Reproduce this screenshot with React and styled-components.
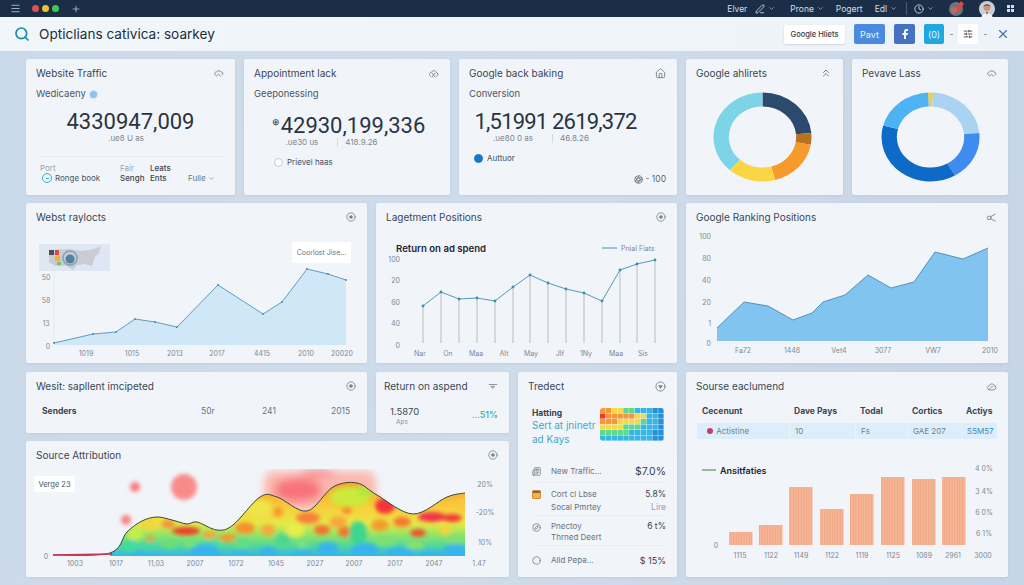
import React from "react";
import styled, { createGlobalStyle } from "styled-components";
import {
  Menu,
  Plus,
  Search,
  X,
  ChevronDown,
  PenLine,
  Clock,
  Home,
  ChevronsUp,
  Facebook,
  SlidersHorizontal,
  Newspaper,
  Compass,
  Circle,
  Aperture,
} from "lucide-react";

const GlobalStyle = createGlobalStyle`
  html, body {
    margin: 0;
    padding: 0;
    width: 1024px;
    height: 585px;
    overflow: hidden;
    font-family: "Inter", "Liberation Sans", sans-serif;
    color: #2c3a4a;
  }
  * { box-sizing: border-box; }
`;

const Page = styled.div`
  width: 1024px;
  height: 585px;
  display: flex;
  flex-direction: column;
  background: linear-gradient(100deg, #cbdaea 0%, #cfdcea 50%, #c6d5e7 100%);
`;

const TopBar = styled.div`
  height: 17px;
  background: #1a2f47;
  display: flex;
  align-items: center;
  padding: 0 10px;
  color: #d3dde8;
  font-size: 8.5px;
  flex: none;
`;

const Dot = styled.span`
  width: 7px;
  height: 7px;
  border-radius: 50%;
  background: ${(p) => p.color};
  margin-left: ${(p) => p.$ml || 3}px;
`;

const TopItem = styled.span`
  display: flex;
  align-items: center;
  gap: 3px;
  margin-left: ${(p) => p.$ml || 0}px;
  white-space: nowrap;
`;

const TopDivider = styled.span`
  width: 1px;
  height: 13px;
  background: #4a5f78;
  margin-left: 9px;
`;

const Spacer = styled.div`
  flex: 1;
`;

const HeaderBar = styled.div`
  height: 34px;
  flex: none;
  background: linear-gradient(90deg, #f1f6fb, #eef3f9);
  display: flex;
  align-items: center;
  padding: 0 14px;
`;

const PageTitle = styled.h1`
  margin: 0 0 0 9px;
  font-size: 13.6px;
  font-weight: 400;
  color: #1f2c3a;
`;

const GhostButton = styled.button`
  width: 61px;
  height: 19px;
  border: 0;
  padding: 0;
  border-radius: 2px;
  background: #fff;
  font: 500 7.5px "Inter", sans-serif;
  color: #2e3a48;
  box-shadow: 0 1px 2px rgba(70, 90, 120, 0.2);
`;

const ColorButton = styled.button`
  width: ${(p) => p.$w}px;
  height: 20px;
  margin-left: ${(p) => p.$ml}px;
  border: 0;
  padding: 0;
  border-radius: 2px;
  background: ${(p) => p.$bg};
  color: #eaf4ff;
  font: 400 9px "Inter", sans-serif;
  display: flex;
  align-items: center;
  justify-content: center;
`;

const Dash = styled.span`
  width: 3px;
  height: 1px;
  background: #8fa0b4;
  margin-left: ${(p) => p.$ml}px;
`;

const Main = styled.main`
  padding: 8px 16px 0 26px;
  display: flex;
  flex-direction: column;
`;

const Row = styled.div`
  display: grid;
  grid-template-columns: ${(p) => p.$cols};
  column-gap: 9px;
  height: ${(p) => p.$h}px;
  margin-bottom: ${(p) => p.$mb || 0}px;
`;

const Stack = styled.div`
  display: flex;
  flex-direction: column;
  gap: 8px;
`;

const Card = styled.section`
  position: relative;
  background: #f1f5fa;
  border-radius: 2px;
  display: flex;
  flex-direction: column;
  min-width: 0;
  height: ${(p) => (p.$h ? `${p.$h}px` : "auto")};
  box-shadow: 0 1px 3px rgba(110, 135, 170, 0.12);
`;

const CardHead = styled.header`
  height: 28px;
  flex: none;
  padding: 0 11px 0 ${(p) => p.$pl || 10}px;
  display: flex;
  align-items: center;
  justify-content: space-between;
  font-size: 10px;
  color: #3a4654;
  white-space: nowrap;
  svg {
    color: #76828f;
  }
`;

const CardBody = styled.div`
  padding: 0 10px;
  flex: 1;
  display: flex;
  flex-direction: column;
`;

const Subtitle = styled.div`
  font-size: 9.5px;
  line-height: 14px;
  color: #4b5764;
  display: flex;
  align-items: center;
  gap: 4px;
`;

const InfoDot = styled.span`
  width: 7px;
  height: 7px;
  border-radius: 50%;
  background: #8cc3ee;
  box-shadow: 0 0 0 1px #d5e6f5;
`;

const BigNumber = styled.div`
  margin-top: 8px;
  font-family: "Roboto", sans-serif;
  font-size: 22px;
  line-height: 26px;
  color: #2a3440;
  text-align: center;
  letter-spacing: ${(p) => p.$ls || 0}px;
  padding: 0 ${(p) => p.$pr || 0}px 0 ${(p) => p.$pl || 0}px;
  white-space: nowrap;
`;

const SmallSup = styled.span`
  font-size: 9px;
  vertical-align: 8px;
  margin-right: 1px;
`;

const SubStats = styled.div`
  display: flex;
  justify-content: center;
  align-items: center;
  height: 10px;
  font-size: 8px;
  color: #7b8692;
  margin-top: -2px;
  padding-right: ${(p) => p.$pr || 0}px;
  white-space: nowrap;
`;

const StatBar = styled.span`
  width: 1px;
  height: 9px;
  background: #d3dbe4;
  margin: 0 7px 0 19px;
`;

const Legend = styled.div`
  display: flex;
  align-items: center;
  gap: 4px;
  font-size: 8px;
  color: #44505d;
  margin-top: 10px;
  padding-left: ${(p) => p.$pl}px;
`;

const RadioMark = styled.span`
  width: 9px;
  height: 9px;
  border-radius: 50%;
  background: ${(p) => (p.$on ? "#1878c8" : "#fff")};
  border: 1px solid ${(p) => (p.$on ? "#1878c8" : "#c4ccd6")};
`;

const FootGrid = styled.div`
  margin-top: 13px;
  border-top: 1px solid #e8edf3;
  padding: 6px 0 0 4px;
  display: grid;
  grid-template-columns: 80px 30px 38px auto;
  font-size: 8px;
  line-height: 10px;
  color: #4a5562;
`;

const FootCell = styled.div`
  display: flex;
  flex-direction: column;
`;

const Muted = styled.span`
  color: #98a3af;
`;

const Strong = styled.span`
  color: #3a4552;
  font-weight: 500;
`;

const FootLabel = styled.span`
  display: flex;
  align-items: center;
  gap: 3px;
  margin-left: 2px;
`;

const ClockMark = styled.span`
  width: 10px;
  height: 10px;
  border-radius: 50%;
  border: 1px solid #2fb3bf;
  display: flex;
  align-items: center;
  justify-content: center;
  &::after {
    content: "";
    width: 3px;
    height: 1px;
    background: #2fb3bf;
  }
`;

const FootMenu = styled.span`
  display: flex;
  align-items: center;
  gap: 2px;
  align-self: flex-end;
  color: #6b7682;
`;

const CornerStat = styled.div`
  position: absolute;
  right: 11px;
  bottom: 11px;
  display: flex;
  align-items: center;
  gap: 3px;
  font-size: 8.5px;
  color: #5b6672;
`;

const DonutWrap = styled.div`
  flex: 1;
  display: flex;
  justify-content: center;
  padding: 5px ${(p) => p.$pr || 0}px 0 0;
`;

const ChartSvg = styled.svg`
  display: block;
  flex: none;
`;

const AxisText = styled.text`
  font-family: "Inter", sans-serif;
  font-size: 7px;
  fill: #7d8894;
`;

const ChartHeading = styled.text`
  font-family: "Inter", sans-serif;
  font-size: ${(p) => p.$size || 9.6}px;
  font-weight: 600;
  fill: #1c2631;
`;

const MapThumb = styled.div`
  position: absolute;
  left: 13px;
  top: 41px;
  width: 71px;
  height: 27px;
  background: #dfe6f4;
`;

const Tooltip = styled.div`
  position: absolute;
  left: 266px;
  top: 39px;
  width: 59px;
  height: 21px;
  background: #fff;
  font-size: 7px;
  color: #6a7480;
  display: flex;
  align-items: center;
  justify-content: center;
`;

const SendersRow = styled.div`
  display: grid;
  grid-template-columns: 159px 61px 69px auto;
  padding: 6px 0 0 6px;
  font-size: 8.5px;
  color: #69747f;
`;

const BoldLabel = styled.span`
  font-weight: 700;
  color: #38434f;
  font-size: 8.5px;
`;

const RoasBody = styled.div`
  padding: 6px 11px 0 14px;
  display: flex;
  justify-content: space-between;
  align-items: center;
`;

const RoasValue = styled.div`
  font-size: 9.5px;
  line-height: 12px;
  color: #3e4955;
  display: flex;
  flex-direction: column;
`;

const RoasNote = styled.span`
  font-size: 6.5px;
  line-height: 9px;
  color: #87929d;
  padding-left: 6px;
`;

const RoasDelta = styled.span`
  font-size: 9px;
  font-weight: 500;
  color: #2cb5ae;
  margin-bottom: 4px;
`;

const HeatLabel = styled.div`
  position: absolute;
  left: 8px;
  top: 35px;
  width: 41px;
  height: 16px;
  background: #fff;
  border-radius: 1px;
  font-size: 7.5px;
  color: #4b5560;
  display: flex;
  align-items: center;
  justify-content: center;
`;

const PromoRow = styled.div`
  display: flex;
  justify-content: space-between;
  padding: 8px 13px 0 14px;
`;

const PromoText = styled.div`
  display: flex;
  flex-direction: column;
`;

const PromoLink = styled.span`
  font-size: 10px;
  line-height: 14px;
  color: #3fa9c9;
  white-space: nowrap;
`;

const MetricList = styled.div`
  margin-top: 14px;
  padding: 0 11px 0 14px;
  display: flex;
  flex-direction: column;
`;

const Metric = styled.div`
  display: grid;
  grid-template-columns: 19px 1fr auto;
  align-items: ${(p) => (p.$double ? "start" : "center")};
  height: ${(p) => p.$h}px;
  padding-top: ${(p) => (p.$double ? 5 : 0)}px;
  border-bottom: ${(p) => (p.$last ? "0" : "1px solid #e9eef4")};
  font-size: 8px;
  line-height: ${(p) => p.$lh || 13}px;
  color: #66717d;
  svg {
    color: #6c7783;
  }
`;

const MetricValue = styled.div`
  text-align: right;
  font-size: ${(p) => p.$size || 8.5}px;
  color: #3a4450;
`;

const SwatchIcon = styled.span`
  width: 9px;
  height: 9px;
  margin-top: 2px;
  border-radius: 1px;
  border: 1px solid #d98a3a;
  background: linear-gradient(#6a6f5a 30%, #f3b53a 30%);
`;

const TableGrid = styled.div`
  display: grid;
  grid-template-columns: 92px 66px 52px 54px 36px;
  margin: 4px 1px 0;
`;

const HeadCell = styled.div`
  padding-left: 5px;
  height: 19px;
  padding-top: 2px;
  font-size: 8.5px;
  font-weight: 700;
  color: #3a4552;
  white-space: nowrap;
`;

const DataCell = styled.div`
  height: 16px;
  padding-left: 5px;
  background: #dbeefa;
  border-left: ${(p) => (p.$first ? "0" : "1px solid #e6f3fb")};
  display: flex;
  align-items: center;
  gap: 3px;
  font-size: 8px;
  color: ${(p) => (p.$blue ? "#3f8ab5" : "#6c8294")};
  white-space: nowrap;
`;

const PinkDot = styled.span`
  width: 6px;
  height: 6px;
  border-radius: 50%;
  background: #c83a72;
`;

/* --- small card icons --- */

const Glyph = ({ size = 11, children }) => (
  <svg width={size} height={size} viewBox="0 0 12 12" fill="none" stroke="currentColor" strokeWidth="1" strokeLinecap="round" strokeLinejoin="round">
    {children}
  </svg>
);

const CloudFold = () => (
  <Glyph>
    <path d="M2.8 8C.8 6.8 2 4 4.2 4.2 5 2.6 8 2.6 8.8 4.4c1.9-.1 2.8 2.2 1.3 3.4" />
    <path d="M3.8 8.8L6 6.8l2.2 2" />
  </Glyph>
);

const CloudCross = () => (
  <Glyph>
    <path d="M2.6 9C.6 7.6 1.8 4.4 4 4.6 5 2.2 8.4 2.4 9 4.8c1.9.2 2.4 3 .8 4.2" />
    <path d="M4.4 5.6l3.4 4.2M7.8 5.6l-3.4 4.2" />
  </Glyph>
);

const RingDot = ({ size = 10 }) => (
  <Glyph size={size}>
    <circle cx="6" cy="6" r="5" />
    <circle cx="6" cy="6" r="2.2" fill="currentColor" stroke="none" />
  </Glyph>
);

const ShareTail = () => (
  <Glyph>
    <circle cx="3.4" cy="6.4" r="2" />
    <path d="M5 5.2L10 2.4M5.2 7.4L10 10" />
  </Glyph>
);

const LineFunnel = () => (
  <Glyph size={10}>
    <path d="M1.5 4.2h9" />
    <path d="M4 6.4h4L6 8.6z" />
  </Glyph>
);

const RingFunnel = () => (
  <Glyph>
    <circle cx="6" cy="6" r="5" />
    <path d="M3.4 4.6h5.2L6 8.8z" fill="currentColor" stroke="none" />
  </Glyph>
);

const CloudSlim = () => (
  <Glyph>
    <path d="M3 9.4C.8 8.6 1.4 5.4 3.6 5.4 4.2 2.6 8.2 2.4 9 5c1.9 0 2.4 3 .8 4.2C8.6 10 5 10 3 9.4z" />
    <path d="M7 5.6L4.6 8" />
  </Glyph>
);

/* --- chart data, in page coordinates --- */

const trafficPoints = [
  [54, 343], [93, 334], [116, 332], [135, 319], [155, 322], [177, 327],
  [218, 285], [263, 314], [282, 302], [307, 269], [328, 274], [346, 280],
];
const spendPoints = [
  [423, 306], [441, 292], [459, 299], [477, 298], [495, 301], [513, 287], [530, 275],
  [548, 283], [566, 289], [584, 293], [602, 301], [620, 270], [637, 264], [655, 260],
];
const rankPoints = [
  [717, 328], [744, 302], [768, 306], [793, 320], [812, 313], [823, 302], [845, 295],
  [868, 275], [891, 288], [914, 282], [935, 252], [963, 259], [988, 248],
];
const heatCurve = [
  [53, 555], [110, 553], [127, 532], [142, 521], [157, 517], [172, 520], [187, 524], [197, 522],
  [217, 530], [233, 525], [260, 497], [277, 497], [307, 511], [333, 487],
  [357, 483], [377, 495], [413, 514], [447, 497], [465, 493],
];

// x, y, rx, ry, colour: the mottled patches of the heat area, painted in order
const heatBlobs = [
  [135, 534, 8, 6, "#c8ec50"], [150, 524, 10, 6, "#f0d83e"], [150, 540, 4, 4, "#f59a2a"], [168, 524, 7, 4, "#f78a3a"],
  [186, 531, 14, 4, "#f0382c"], [210, 535, 7, 4, "#f7a43a"], [228, 538, 9, 4, "#f59a2a"],
  [258, 508, 14, 8, "#eee648"], [245, 528, 10, 6, "#f7902e"], [278, 512, 5, 5, "#f59a2a"], [268, 530, 7, 6, "#f8a83a"],
  [295, 530, 10, 7, "#e6ee4a"], [308, 518, 12, 6, "#f6803a"], [322, 530, 8, 5, "#f4702e"], [338, 522, 9, 6, "#f8a83a"],
  [345, 532, 7, 5, "#f4702e"], [347, 510, 5, 4, "#f58a2e"], [350, 497, 20, 10, "#cbea3c"], [366, 490, 10, 6, "#b4e640"],
  [365, 512, 8, 6, "#f2d83c"], [385, 506, 10, 8, "#f2363a"], [380, 525, 9, 6, "#f59a2e"], [402, 522, 9, 5, "#f7762e"],
  [418, 533, 8, 4, "#f0502e"], [432, 517, 14, 5, "#f0304a"], [452, 518, 10, 4, "#f4363a"], [462, 504, 7, 5, "#f8c83a"],
  [445, 530, 6, 5, "#f8d23c"], [130, 546, 8, 6, "#3fdca0"], [148, 546, 8, 5, "#45d8a0"], [170, 544, 8, 4, "#6ce074"],
  [190, 544, 8, 3, "#7ae270"], [212, 545, 10, 6, "#4cdc9c"], [242, 543, 9, 6, "#62de84"], [283, 540, 8, 7, "#4ed88e"],
  [302, 544, 6, 4, "#7ce27c"], [358, 533, 9, 12, "#3ed68e"], [385, 541, 10, 5, "#7ee070"], [415, 545, 10, 4, "#8ae268"],
  [455, 540, 9, 5, "#7ee070"], [145, 556, 14, 5, "#39b6ea"], [205, 552, 15, 8, "#38b4ec"], [240, 555, 11, 5, "#38b8ea"],
  [268, 552, 8, 5, "#38b4ec"], [302, 555, 10, 5, "#38b4ec"], [328, 549, 11, 7, "#38b4ec"], [365, 551, 14, 8, "#38b4ec"],
  [400, 553, 14, 6, "#38b4ec"], [430, 555, 12, 4, "#38b4ec"], [455, 551, 12, 7, "#38b4ec"],
];

const cellColors = {
  r: "#ea3b2e", o: "#f6963a", y: "#f6d94a", g: "#5fd88e", c: "#35b6e6", b: "#2690d8",
};
const cellRows = [
  "ooyyggcccbb",
  "roooooyyccb",
  "oooyyyygccb",
  "yyyygggcccb",
  "gggggccccbb",
  "cccccccccbb",
];

const polar = (deg, r) => {
  const rad = ((deg - 90) * Math.PI) / 180;
  return `${(r * Math.cos(rad)).toFixed(2)} ${(r * Math.sin(rad)).toFixed(2)}`;
};

const ringPath = (from, to, outer, inner) => {
  const large = to - from > 180 ? 1 : 0;
  return `M${polar(from, outer)}A${outer} ${outer} 0 ${large} 1 ${polar(to, outer)}L${polar(to, inner)}A${inner} ${inner} 0 ${large} 0 ${polar(from, inner)}Z`;
};

const linePath = (pts) => pts.map(([x, y], i) => `${i ? "L" : "M"}${x} ${y}`).join("");

const areaPath = (pts, base) =>
  `${linePath(pts)}L${pts[pts.length - 1][0]} ${base}L${pts[0][0]} ${base}Z`;

// catmull-rom through the points, for the soft heat curve
const smoothPath = (pts) => {
  let d = `M${pts[0][0]} ${pts[0][1]}`;
  for (let i = 0; i < pts.length - 1; i++) {
    const p0 = pts[i - 1] || pts[i];
    const p1 = pts[i];
    const p2 = pts[i + 1];
    const p3 = pts[i + 2] || p2;
    const c1x = p1[0] + (p2[0] - p0[0]) / 6;
    const c1y = p1[1] + (p2[1] - p0[1]) / 6;
    const c2x = p2[0] - (p3[0] - p1[0]) / 6;
    const c2y = p2[1] - (p3[1] - p1[1]) / 6;
    d += `C${c1x} ${c1y} ${c2x} ${c2y} ${p2[0]} ${p2[1]}`;
  }
  return d;
};

const Donut = ({ segments }) => (
  <ChartSvg width="99" height="90" viewBox="-50 -50 100 100" preserveAspectRatio="none">
    {segments.map(([from, to, color]) => (
      <path key={from} d={ringPath(from, to, 49.5, 34)} fill={color} />
    ))}
  </ChartSvg>
);

const Labels = ({ items, anchor = "middle" }) =>
  items.map(([label, x, y]) => (
    <AxisText key={`${label}${x}${y}`} x={x} y={y} textAnchor={anchor}>
      {label}
    </AxisText>
  ));

const TrafficChart = () => (
  <ChartSvg width="341" height="132" viewBox="26 231 341 132">
    <line x1="54" y1="271" x2="54" y2="345" stroke="#e3e9f0" />
    <path d={areaPath(trafficPoints, 345)} fill="#cfe7f7" />
    <path d={linePath(trafficPoints)} fill="none" stroke="#5d9fbd" strokeWidth="1" />
    {trafficPoints.map(([x, y]) => (
      <circle key={x} cx={x} cy={y} r="1" fill="#4d8fae" />
    ))}
    <Labels items={[["50", 46, 280], ["58", 46, 303], ["13", 46, 326], ["0", 48, 349]]} />
    <Labels
      items={[["1019", 86, 356], ["1015", 132, 356], ["2013", 175, 356], ["2017", 217, 356], ["4415", 262, 356], ["2010", 306, 356], ["20020", 342, 356]]}
    />
  </ChartSvg>
);

const SpendChart = () => (
  <ChartSvg width="301" height="132" viewBox="376 231 301 132">
    <ChartHeading x="396" y="252">Return on ad spend</ChartHeading>
    <line x1="602" y1="248" x2="617" y2="248" stroke="#5aa9c0" strokeWidth="1.2" />
    <AxisText x="621" y="251">Pnial Fiats</AxisText>
    {spendPoints.map(([x, y]) => (
      <line key={x} x1={x} y1={y} x2={x} y2="343" stroke="#cdd2d8" strokeWidth="1.6" />
    ))}
    <path d={linePath(spendPoints)} fill="none" stroke="#4f9db5" strokeWidth="1" />
    {spendPoints.map(([x, y]) => (
      <circle key={x} cx={x} cy={y} r="1.4" fill="#3f8ea8" />
    ))}
    <Labels
      items={[["100", 400, 262], ["20", 400, 283], ["60", 400, 305], ["40", 400, 326], ["0", 400, 348]]}
      anchor="end"
    />
    <Labels
      items={[["Nar", 420, 356], ["On", 448, 356], ["Maa", 476, 356], ["Alt", 504, 356], ["May", 531, 356], ["Jlf", 560, 356], ["1Ny", 586, 356], ["Maa", 616, 356], ["Sis", 643, 356]]}
    />
  </ChartSvg>
);

const RankChart = () => (
  <ChartSvg width="322" height="132" viewBox="686 231 322 132">
    <path d={areaPath(rankPoints, 341)} fill="#81c4f0" />
    <path d={linePath(rankPoints)} fill="none" stroke="#4f93bd" strokeWidth="1" />
    <Labels
      items={[["100", 711, 239], ["80", 711, 261], ["40", 711, 283], ["20", 711, 305], ["1", 711, 326], ["0", 711, 346]]}
      anchor="end"
    />
    <Labels
      items={[["Fa72", 743, 353], ["1448", 792, 353], ["Vet4", 839, 353], ["3077", 883, 353], ["VW7", 933, 353], ["2010", 990, 353]]}
    />
  </ChartSvg>
);

const HeatChart = () => {
  const curve = smoothPath(heatCurve);
  return (
    <ChartSvg width="483" height="108" viewBox="26 469 483 108">
      <defs>
        <linearGradient id="heatBase" x1="0" y1="0" x2="0" y2="1">
          <stop offset="0" stopColor="#f8a030" />
          <stop offset="0.35" stopColor="#f7cf3c" />
          <stop offset="0.55" stopColor="#e8e846" />
          <stop offset="0.72" stopColor="#8fe468" />
          <stop offset="0.86" stopColor="#4fd89a" />
          <stop offset="1" stopColor="#38b4ec" />
        </linearGradient>
        <clipPath id="heatClip">
          <path d={`${curve}L465 556L53 556Z`} />
        </clipPath>
        <filter id="blurA" x="-50%" y="-50%" width="200%" height="200%">
          <feGaussianBlur stdDeviation="2.2" />
        </filter>
        <filter id="blurB" x="-50%" y="-50%" width="200%" height="200%">
          <feGaussianBlur stdDeviation="2" />
        </filter>
        <filter id="blurC" x="-20%" y="-50%" width="140%" height="200%">
          <feGaussianBlur stdDeviation="4.5" />
        </filter>
      </defs>
      <g filter="url(#blurB)">
        <circle cx="135" cy="487" r="5" fill="#f7797b" />
        <circle cx="184" cy="487" r="13" fill="#f98a88" />
        <circle cx="126" cy="520" r="5" fill="#f88080" />
      </g>
      <g filter="url(#blurC)">
        <rect x="264" y="471" width="112" height="40" rx="10" fill="#fbb8ae" />
        <ellipse cx="298" cy="490" rx="24" ry="12" fill="#f8727c" />
        <ellipse cx="318" cy="473" rx="18" ry="4" fill="#f98a8c" />
      </g>
      <g clipPath="url(#heatClip)">
        <rect x="110" y="483" width="360" height="73" fill="url(#heatBase)" />
        <g filter="url(#blurA)">
          {heatBlobs.map(([cx, cy, rx, ry, fill]) => (
            <ellipse key={`${cx}-${cy}`} cx={cx} cy={cy} rx={rx} ry={ry} fill={fill} />
          ))}
        </g>
      </g>
      <path d={curve} fill="none" stroke="#384738" strokeWidth="1" />
      <line x1="53" y1="555" x2="112" y2="554" stroke="#c8324e" strokeWidth="1.4" />
      <AxisText x="46" y="559" textAnchor="middle">0</AxisText>
      <Labels items={[["20%", 485, 487], ["-20%", 485, 515], ["10%", 485, 545]]} />
      <Labels
        items={[["1003", 75, 566], ["1017", 116, 566], ["11,03", 156, 566], ["2007", 195, 566], ["1072", 236, 566], ["1045", 276, 566], ["2027", 315, 566], ["2007", 354, 566], ["2017", 395, 566], ["2047", 434, 566], ["1.47", 479, 566]]}
      />
    </ChartSvg>
  );
};

const barData = [
  [729, 532], [759, 525], [789, 487], [820, 509], [850, 494], [881, 477], [912, 479], [942, 477],
];

const BarsChart = () => (
  <ChartSvg width="322" height="125" viewBox="686 452 322 125">
    <defs>
      <pattern id="barStripes" width="2.6" height="4" patternUnits="userSpaceOnUse">
        <rect width="2.6" height="4" fill="#f6b595" />
        <rect width="0.8" height="4" fill="#f0a684" />
      </pattern>
    </defs>
    <line x1="702" y1="470" x2="716" y2="470" stroke="#5f8f4f" strokeWidth="1.2" />
    <ChartHeading x="720" y="474" $size={9}>Ansitfaties</ChartHeading>
    {barData.map(([x, top]) => (
      <rect key={x} x={x} y={top} width="23.5" height={545 - top} fill="url(#barStripes)" />
    ))}
    <Labels items={[["4 0%", 984, 471], ["3 4%", 984, 494], ["6 0%", 984, 515], ["6 1%", 984, 536]]} />
    <AxisText x="716" y="548" textAnchor="middle">0</AxisText>
    <Labels
      items={[["1115", 740, 558], ["1122", 771, 558], ["1149", 801, 558], ["1122", 832, 558], ["1119", 862, 558], ["1125", 893, 558], ["1089", 924, 558], ["2961", 953, 558], ["3000", 983, 558]]}
    />
  </ChartSvg>
);

const MiniHeat = () => (
  <ChartSvg width="64" height="33" viewBox="0 0 64 33">
    <defs>
      <filter id="cellSoft">
        <feGaussianBlur stdDeviation="0.6" />
      </filter>
      <clipPath id="cellClip">
        <rect width="64" height="33" rx="3" />
      </clipPath>
    </defs>
    <g clipPath="url(#cellClip)">
      <g filter="url(#cellSoft)">
        {cellRows.map((row, y) =>
          row.split("").map((c, x) => (
            <rect key={`${x}-${y}`} x={x * 5.82} y={y * 5.5} width="5.4" height="5.1" fill={cellColors[c]} />
          ))
        )}
      </g>
    </g>
  </ChartSvg>
);

const UsaMap = () => (
  <ChartSvg width="71" height="27" viewBox="0 0 71 27">
    <path
      d="M10 6L30 5L42 7L52 6L60 3L62 2L60 9L56 13L53 22L46 20L38 21L34 26L28 22L16 22L10 18Z"
      fill="#c9ccd2"
    />
    <rect x="10" y="6" width="5" height="5" fill="#4a5058" />
    <rect x="16" y="6" width="4" height="5" fill="#e0483f" />
    <rect x="16" y="12" width="5" height="5" fill="#efb23e" />
    <rect x="18" y="18" width="4" height="3" fill="#79c16a" />
    <circle cx="31" cy="14" r="7" fill="none" stroke="#86a0b4" strokeWidth="1.5" />
    <circle cx="31" cy="15" r="4.5" fill="#4f829f" />
  </ChartSvg>
);

const AvatarRed = () => (
  <ChartSvg width="16" height="15" viewBox="0 0 16 15">
    <circle cx="8" cy="8" r="7" fill="#6d7480" />
    <path d="M7 8L13 0L16 3L11 10Z" fill="#e0463a" />
    <circle cx="6" cy="9" r="3" fill="#c9665a" />
  </ChartSvg>
);

const AvatarFace = () => (
  <ChartSvg width="16" height="16" viewBox="0 0 16 16">
    <circle cx="8" cy="8" r="8" fill="#c8ced6" />
    <circle cx="8" cy="6.5" r="3.4" fill="#c99478" />
    <path d="M4.4 6C4.6 2.6 11.4 2.6 11.6 6L10 4.6L6 4.6Z" fill="#3c2c26" />
    <path d="M2.5 16C3 11 13 11 13.5 16Z" fill="#f4f4f6" />
    <path d="M7 11L8 14L9 11Z" fill="#a23c3c" />
  </ChartSvg>
);

const GridDots = () => (
  <ChartSvg width="7" height="7" viewBox="0 0 7 7">
    <rect width="3" height="3" fill="#d3dde8" />
    <rect x="4" width="3" height="3" fill="#d3dde8" />
    <rect y="4" width="3" height="3" fill="#d3dde8" />
    <rect x="4" y="4" width="3" height="3" fill="#d3dde8" />
  </ChartSvg>
);

const App = () => (
  <Page>
    <GlobalStyle />
    <TopBar>
      <Menu size={11} strokeWidth={1.6} />
      <Dot color="#e0504f" $ml={11} />
      <Dot color="#ecc02e" />
      <Dot color="#3ec85a" />
      <TopItem $ml={12}><Plus size={10} strokeWidth={1.6} /></TopItem>
      <Spacer />
      <TopItem>Elver</TopItem>
      <TopItem $ml={8}><PenLine size={10} /><ChevronDown size={7} /></TopItem>
      <TopItem $ml={15}>Prone<ChevronDown size={7} /></TopItem>
      <TopItem $ml={12}>Pogert</TopItem>
      <TopItem $ml={12}>Edl<ChevronDown size={7} /></TopItem>
      <TopDivider />
      <TopItem $ml={7}><Clock size={10} /><ChevronDown size={7} /></TopItem>
      <TopItem $ml={14}><AvatarRed /></TopItem>
      <TopItem $ml={15}><AvatarFace /></TopItem>
      <TopItem $ml={12}><GridDots /></TopItem>
    </TopBar>

    <HeaderBar>
      <Search size={16} color="#1d8ea6" strokeWidth={2.6} />
      <PageTitle>Opticlians cativica: soarkey</PageTitle>
      <Spacer />
      <GhostButton>Google Hliets</GhostButton>
      <ColorButton $w={31} $ml={9} $bg="#4a8be0">Pavt</ColorButton>
      <ColorButton $w={21} $ml={9} $bg="#4472c0"><Facebook size={12} fill="#fff" strokeWidth={0} /></ColorButton>
      <ColorButton $w={20} $ml={9} $bg="#1fa8e0">(0)</ColorButton>
      <Dash $ml={6} />
      <ColorButton $w={20} $ml={5} $bg="#fff"><SlidersHorizontal size={10} color="#333" /></ColorButton>
      <Dash $ml={6} />
      <X size={14} color="#3f6fb5" style={{ marginLeft: 9 }} />
    </HeaderBar>

    <Main>
      <Row $cols="209px 206px 218px 157px 156px" $h={136} $mb={8}>
        <Card>
          <CardHead>Website Traffic<CloudFold /></CardHead>
          <CardBody>
            <Subtitle>Wedicaeny <InfoDot /></Subtitle>
            <BigNumber>4330947,009</BigNumber>
            <SubStats $pr={9}>.ue8 U as</SubStats>
            <FootGrid>
              <FootCell>
                <Muted>Port</Muted>
                <FootLabel><ClockMark />Ronge book</FootLabel>
              </FootCell>
              <FootCell><Muted>Fair</Muted><Strong>Sengh</Strong></FootCell>
              <FootCell><Strong>Leats</Strong><Strong>Ents</Strong></FootCell>
              <FootMenu>Fulle<ChevronDown size={7} /></FootMenu>
            </FootGrid>
          </CardBody>
        </Card>
        <Card>
          <CardHead>Appointment lack<CloudCross /></CardHead>
          <CardBody>
            <Subtitle>Geeponessing</Subtitle>
            <BigNumber $pl={3}><SmallSup>⊕</SmallSup>42930,199,336</BigNumber>
            <SubStats $pr={31}>.ue30 us<StatBar />418.9.26</SubStats>
            <Legend $pl={20}><RadioMark />Prievel haas</Legend>
          </CardBody>
        </Card>
        <Card>
          <CardHead>Google back baking<Home size={11} /></CardHead>
          <CardBody>
            <Subtitle>Conversion</Subtitle>
            <BigNumber $pr={25} $ls={-0.8}>1,51991 2619,372</BigNumber>
            <SubStats $pr={54}>.ue80 0 as<StatBar />46.8.26</SubStats>
            <Legend $pl={5}><RadioMark $on />Auttuor</Legend>
          </CardBody>
          <CornerStat><Aperture size={9} />- 100</CornerStat>
        </Card>
        <Card>
          <CardHead>Google ahlirets<ChevronsUp size={12} /></CardHead>
          <DonutWrap $pr={4}>
            <Donut
              segments={[
                [0, 85, "#2b4a6d"],
                [85, 100, "#b87322"],
                [100, 165, "#f79a2e"],
                [165, 222, "#fbd544"],
                [222, 360, "#7dd4e6"],
              ]}
            />
          </DonutWrap>
        </Card>
        <Card>
          <CardHead>Pevave Lass<CloudFold /></CardHead>
          <DonutWrap>
            <Donut
              segments={[
                [-3, 3, "#e4d35a"],
                [3, 85, "#a9d3f0"],
                [85, 150, "#3f8cf0"],
                [150, 285, "#0d6bc7"],
                [285, 357, "#4db3f5"],
              ]}
            />
          </DonutWrap>
        </Card>
      </Row>

      <Row $cols="341px 301px 322px" $h={160} $mb={9}>
        <Card>
          <CardHead>Webst raylocts<RingDot /></CardHead>
          <TrafficChart />
          <MapThumb><UsaMap /></MapThumb>
          <Tooltip>Coorlost Jise...</Tooltip>
        </Card>
        <Card>
          <CardHead>Lagetment Positions<RingDot /></CardHead>
          <SpendChart />
        </Card>
        <Card>
          <CardHead>Google Ranking Positions<ShareTail /></CardHead>
          <RankChart />
        </Card>
      </Row>

      <Row $cols="483px 159px 322px" $h={205}>
        <Stack>
          <Row $cols="341px 133px" $h={61}>
            <Card>
              <CardHead>Wesit: sapllent imcipeted<RingDot /></CardHead>
              <CardBody>
                <SendersRow>
                  <BoldLabel>Senders</BoldLabel>
                  <span>50r</span>
                  <span>241</span>
                  <span>2015</span>
                </SendersRow>
              </CardBody>
            </Card>
            <Card>
              <CardHead $pl={8}>Return on aspend<LineFunnel /></CardHead>
              <RoasBody>
                <RoasValue>1.5870<RoasNote>Aps</RoasNote></RoasValue>
                <RoasDelta>...51%</RoasDelta>
              </RoasBody>
            </Card>
          </Row>
          <Card $h={136}>
            <CardHead>Source Attribution<RingDot /></CardHead>
            <HeatChart />
            <HeatLabel>Verge 23</HeatLabel>
          </Card>
        </Stack>

        <Card>
          <CardHead>Tredect<RingFunnel /></CardHead>
          <PromoRow>
            <PromoText>
              <BoldLabel>Hatting</BoldLabel>
              <PromoLink>Sert at jninetr</PromoLink>
              <PromoLink>ad Kays</PromoLink>
            </PromoText>
            <MiniHeat />
          </PromoRow>
          <MetricList>
            <Metric $h={23}>
              <Newspaper size={9} />
              <span>New Traffic...</span>
              <MetricValue $size={10.5}>$7.0%</MetricValue>
            </Metric>
            <Metric $h={33} $double>
              <SwatchIcon />
              <span>Cort cl Lbse<br />Socal Pmrtey</span>
              <MetricValue>5.8%<br /><Muted>Lire</Muted></MetricValue>
            </Metric>
            <Metric $h={30} $double $lh={11}>
              <Compass size={9} style={{ marginTop: 2 }} />
              <span>Pnectoy<br />Thrned Deert</span>
              <MetricValue>6 t%</MetricValue>
            </Metric>
            <Metric $h={29} $last>
              <Circle size={9} />
              <span>Alld Pepa...</span>
              <MetricValue $size={9}>$ 15%</MetricValue>
            </Metric>
          </MetricList>
        </Card>

        <Card>
          <CardHead>Sourse eaclumend<CloudSlim /></CardHead>
          <CardBody>
            <TableGrid>
              <HeadCell>Cecenunt</HeadCell>
              <HeadCell>Dave Pays</HeadCell>
              <HeadCell>Todal</HeadCell>
              <HeadCell>Cortics</HeadCell>
              <HeadCell>Actiys</HeadCell>
              <DataCell $first>&nbsp;<PinkDot />Actistine</DataCell>
              <DataCell>10</DataCell>
              <DataCell>Fs</DataCell>
              <DataCell>GAE 207</DataCell>
              <DataCell $blue>S5M57</DataCell>
            </TableGrid>
          </CardBody>
          <BarsChart />
        </Card>
      </Row>
    </Main>
  </Page>
);

export default App;
